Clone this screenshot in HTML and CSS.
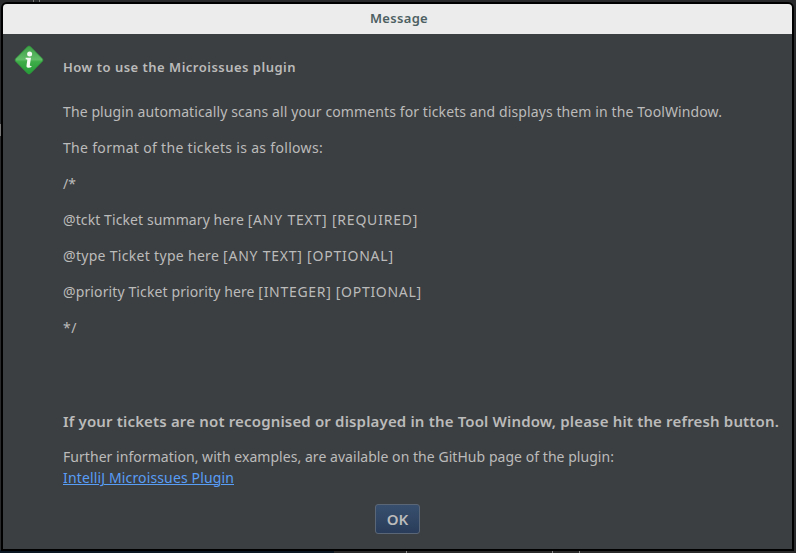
FILE: index.html
```html
<!DOCTYPE html>
<html lang="en">
<head>
<meta charset="utf-8">
<title>Message</title>
<link rel="stylesheet" href="styles.css">
</head>
<body>
<div class="dialog">
  <header class="titlebar"><span class="title">Message</span></header>
  <main class="content">
    <svg class="info-icon" width="30" height="30" viewBox="0 0 30 30" aria-hidden="true">
      <defs>
        <linearGradient id="green" x1="0" y1="0" x2="0" y2="1">
          <stop offset="0" stop-color="#3d9f47"/>
          <stop offset=".48" stop-color="#62bc68"/>
          <stop offset=".56" stop-color="#3eac48"/>
          <stop offset="1" stop-color="#249c38"/>
        </linearGradient>
      </defs>
      <path d="M13.7 1.6Q15 .5 16.3 1.6L28.4 13.7Q29.5 15 28.4 16.3L16.3 28.4Q15 29.5 13.7 28.4L1.6 16.3Q.5 15 1.6 13.7Z" fill="url(#green)" stroke="#2f9a3d" stroke-width=".8"/>
      <circle cx="15.6" cy="9" r="2.5" fill="#f5faf5"/>
      <path d="M11.7 12.8H17L15.8 20.2Q15.7 21.1 17.6 20.9L17.3 22Q15.7 23 13.8 22.7Q12.1 22.3 12.5 20.4L13.3 15Q13.4 14.1 11.6 14.2Z" fill="#f5faf5"/>
    </svg>
    <div class="message">
      <h1 class="heading">How to use the Microissues plugin</h1>
      <div class="instructions">
        <p class="intro">The plugin automatically scans all your comments for tickets and displays them in the ToolWindow.</p>
        <p class="format">The format of the tickets is as follows:</p>
        <p>/*</p>
        <p class="ticket">@tckt Ticket summary here <span class="tags">[ANY TEXT] [REQUIRED]</span></p>
        <p class="type">@type Ticket type here <span class="tags">[ANY TEXT] [OPTIONAL]</span></p>
        <p class="priority">@priority Ticket priority here <span class="tags">[INTEGER] [OPTIONAL]</span></p>
        <p class="close">*/</p>
      </div>
      <p class="notice">If your tickets are not recognised or displayed in the Tool Window, please hit the refresh button.</p>
      <p class="more">Further information, with examples, are available on the GitHub page of the plugin:</p>
      <p class="more"><a class="link" href="#">IntelliJ Microissues Plugin</a></p>
    </div>
  </main>
  <footer class="actions"><button class="ok">OK</button></footer>
</div>
</body>
</html>
```
FILE: styles.css
```css
* { box-sizing: border-box; }
body {
  margin: 0;
  height: 553px;
  padding: 2px 2px 2px 1px;
  overflow: hidden;
  background:
    linear-gradient(#777, #777) 0 124px / 1px 12px no-repeat,
    linear-gradient(#777, #777) 33px 0 / 1px 2px no-repeat,
    linear-gradient(#777, #777) 39px 0 / 1px 2px no-repeat,
    linear-gradient(#888, #888) 406px 551px / 1px 2px no-repeat,
    linear-gradient(#888, #888) 552px 551px / 1px 2px no-repeat,
    linear-gradient(#888, #888) 579px 551px / 1px 2px no-repeat,
    linear-gradient(90deg, #0b1723 0 334px, #29292a 334px) 0 550px / 100% 3px no-repeat,
    #292a2b;
  font: 14px "Noto Sans", sans-serif;
  color: #bbb;
}
.dialog {
  width: 793px;
  height: 549px;
  border: 2px solid #000;
  border-radius: 6px 6px 0 0;
  background: #3c3f41;
  overflow: hidden;
  display: flex;
  flex-direction: column;
}
.titlebar {
  height: 30px;
  background: #ececec;
  color: #4d5f62;
  font-size: 13px;
  font-weight: 600;
  line-height: 29px;
  letter-spacing: .31px;
  text-align: center;
  padding-left: 3px;
}
.content {
  display: flex;
  padding: 11px 0 0 11px;
}
.info-icon { flex: none; margin-right: 19px; }
.message { padding-top: 4px; white-space: nowrap; }
.heading {
  margin: 0 0 9px;
  font-size: 13px;
  font-weight: 600;
  line-height: 36px;
  letter-spacing: .492px;
}
p { margin: 0; line-height: 36px; }
.intro { letter-spacing: .105px; }
.format { letter-spacing: .317px; }
.ticket { letter-spacing: .093px; }
.ticket .tags { letter-spacing: .79px; }
.type { letter-spacing: .305px; }
.type .tags { letter-spacing: .77px; }
.priority { letter-spacing: .115px; }
.priority .tags { letter-spacing: .7px; }
.close { letter-spacing: .5px; }
.instructions { margin-bottom: 57px; }
.notice {
  font-size: 15px;
  font-weight: 600;
  letter-spacing: .163px;
  margin-bottom: 7px;
}
.more { line-height: 21px; letter-spacing: .045px; }
.link {
  color: #589df6;
  letter-spacing: .142px;
  text-decoration: underline;
  text-decoration-thickness: 1px;
  text-underline-offset: 1px;
}
.actions {
  display: flex;
  justify-content: center;
  padding: 16px 0 0;
}
.ok {
  width: 45px;
  height: 30px;
  padding: 0;
  border: 1px solid #5a6676;
  border-radius: 3px;
  background: linear-gradient(#374f6d, #293d5a);
  color: #bbb;
  font: 600 15px/28px "Noto Sans", sans-serif;
}
```
